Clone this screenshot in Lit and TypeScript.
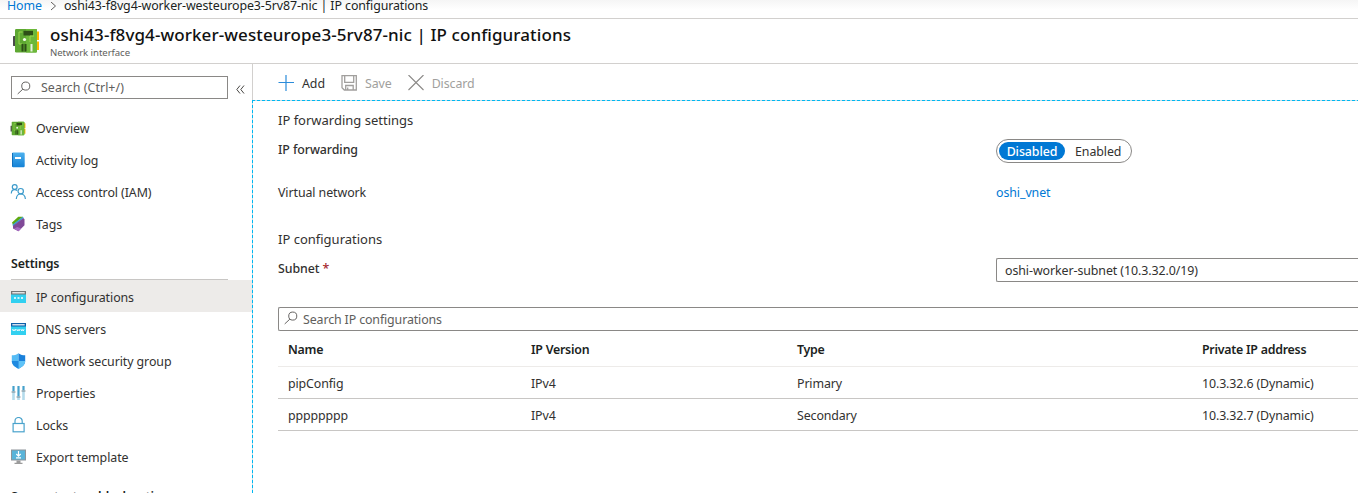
import { LitElement, html, css, svg, type TemplateResult } from "lit";
import { customElement } from "lit/decorators.js";
import { classMap } from "lit/directives/class-map.js";

const nic = svg`
  <rect x="1" y="10" width="3" height="10" rx=".4" fill="#4a4a4a"/>
  <path d="M24.500 5.500H27V14h-2.500zM24.500 15.500H27V24h-2.500z" fill="#ffb900"/>
  <rect x="3" y="3" width="22" height="23.500" rx="1.200" fill="#5ea832"/>
  <path d="M14 3h10a1 1 0 0 1 1 1v21.500a1 1 0 0 1-1 1H14z" fill="#6cb83a"/>
  <rect x="11.500" y="4.800" width="9.500" height="4.700" fill="#2d4f17"/>
  <path d="M10.500 6H7v12h3M22 10h-4v6" stroke="#9bd64f" stroke-width="1" fill="none"/>
  <circle cx="12.500" cy="13.500" r="1.600" fill="#f3ffe8"/>
  <path d="M10.500 18v7.500M13.500 18v7.500" stroke="#2d4f17" stroke-width="2"/><path d="M19.500 18v7.500" stroke="#e8f2e0" stroke-width="2"/>`;

const icons: Record<string, TemplateResult> = {
  nic: html`<svg viewBox="0 0 28 28" width="16" height="16">${nic}</svg>`,
  log: html`<svg viewBox="0 0 16 16" width="16" height="16"><defs><linearGradient id="g" x2="0" y2="1"><stop stop-color="#4db1ee"/><stop offset="1" stop-color="#1482d6"/></linearGradient></defs><rect x="2" y=".5" width="12.700" height="14.700" rx="1.200" fill="url(#g)"/><path d="M2.500 1v13.500" stroke="#0f70bd" stroke-width="1"/><rect x="5" y="5" width="6" height="2" fill="#fff"/></svg>`,
  people: html`<svg viewBox="0 0 16 16" width="16" height="16" fill="none" stroke="#3c9bcb" stroke-width="1.200"><circle cx="4.700" cy="3" r="2.400"/><path d="M1.300 9.500C1.400 7.200 2.600 5.700 4.700 5.700c1.200 0 1.800.4 2.300 1"/><circle cx="10.700" cy="7.200" r="2.700"/><path d="M6.300 15c.2-3.300 1.800-5 4.300-5s4.500 1.700 4.800 5"/></svg>`,
  tag: html`<svg viewBox="0 0 16 16" width="16" height="16"><path d="M2 6.500 8.300.8H13L3 9z" fill="#5ea90f"/><path d="M2.500 8.500 12.800.8l.9 1.200L3 10.500z" fill="#39a2d0"/><path d="M3 9.800 13.500 2l1 1.500v5.700L8.500 15.200 3 12.500z" fill="#804998"/><path d="m4 12.800 4.500 2.400 2.700-2.700-4-1.500z" fill="#a56ac0"/></svg>`,
  ip: html`<svg viewBox="0 0 16 16" width="16" height="16"><rect x="1" y="2" width="15" height="12" fill="#32d0f0"/><rect x="1" y="2" width="15" height="3.500" fill="#767676"/><rect x="2.300" y="3.200" width="12.400" height="1.200" fill="#fff"/><path d="M4 9h2M7.500 9h2M11 9h2" stroke="#fff" stroke-width="1.600"/></svg>`,
  dns: html`<svg viewBox="0 0 16 16" width="16" height="16"><rect x="1" y="2" width="15" height="12" fill="#32d0f0"/><rect x="1" y="2" width="15" height="3.500" fill="#0f5fa8"/><rect x="2.300" y="3.200" width="12.400" height="1.200" fill="#fff"/><path d="m2.500 8 .8 2 .8-1.500.8 1.500.8-2m1 0 .8 2 .8-1.500.8 1.500.8-2m1 0 .8 2 .8-1.500.8 1.500.8-2" stroke="#fff" stroke-width=".8" fill="none"/></svg>`,
  shield: html`<svg viewBox="0 0 16 16" width="16" height="16"><path d="M8.500.3c-2 1.700-4.500 2-6.700 2V8c0 4 4 6.500 6.700 7.700z" fill="#55bcf5"/><path d="M8.500.3c2 1.700 4.500 2 6.700 2V8c0 4-4 6.500-6.700 7.700z" fill="#1a80da"/><path d="M8.500 8h6.700c0 4-4 6.500-6.700 7.700z" fill="#5fc3f7"/><path d="M1.800 8h6.700v7.700C5.800 14.500 1.800 12 1.800 8z" fill="#1f8ae0"/></svg>`,
  props: html`<svg viewBox="0 0 16 16" width="16" height="16"><path d="M3.500 1v14M8.500 1v14M13.500 1v14" stroke="#b4dbec" stroke-width="2.600"/><path d="M3.500 1v5M8.500 1v10M13.500 1v4" stroke="#46a0cb" stroke-width="1.800"/><path d="M1.500 7h4M6.500 12h4M11.500 6h4" stroke="#7a8a92" stroke-width="1.200"/></svg>`,
  lock: html`<svg viewBox="0 0 16 16" width="16" height="16" fill="none" stroke="#4aa3cc" stroke-width="1.200"><rect x="3.100" y="6.500" width="11" height="8.300"/><path d="M5 6.500V4a3.600 3.500 0 0 1 7.200 0v2.500"/></svg>`,
  exp: html`<svg viewBox="0 0 16 16" width="16" height="16"><rect x="1" y=".5" width="15" height="11" fill="#8d9499"/><rect x="2" y="1.500" width="13" height="9" fill="#59b4d9"/><path d="M6.500 11.500h4v2.300h2V15h-8v-1.200h2z" fill="#9b9b9b"/><path d="M8.500 2v5M6.300 5l2.200 2.200L10.700 5M6 8.800h5" stroke="#fff" stroke-width="1.200" fill="none"/></svg>`,
};

const magnifier = html`<svg class="mag" viewBox="0 0 16 16" width="14" height="14" fill="none" stroke="#605e5c" stroke-width="1.100"><circle cx="10" cy="5.800" r="4.600"/><path d="M6.700 9.300.8 14.800"/></svg>`;

interface Item { icon: string; label: string; active?: boolean }

const general: Item[] = [
  { icon: "nic", label: "Overview" },
  { icon: "log", label: "Activity log" },
  { icon: "people", label: "Access control (IAM)" },
  { icon: "tag", label: "Tags" },
];
const settings: Item[] = [
  { icon: "ip", label: "IP configurations", active: true },
  { icon: "dns", label: "DNS servers" },
  { icon: "shield", label: "Network security group" },
  { icon: "props", label: "Properties" },
  { icon: "lock", label: "Locks" },
  { icon: "exp", label: "Export template" },
];
const rows = [
  ["pipConfig", "IPv4", "Primary", "10.3.32.6 (Dynamic)"],
  ["pppppppp", "IPv4", "Secondary", "10.3.32.7 (Dynamic)"],
];

@customElement("app-root")
export class AppRoot extends LitElement {
  static styles = css`
    :host { display: flex; flex-direction: column; height: 493px; width: 100%; overflow: hidden; background: #fff;
      font: 12.4px/20px "Noto Sans", "Open Sans", sans-serif; letter-spacing: -0.08px; color: #323130; }
    * { box-sizing: border-box; }
    svg { display: block; flex: none; }
    .crumbs { display: flex; height: 19px; flex: none; border-bottom: 1px solid #d2d0ce; background: linear-gradient(#f5f5f5, #fff 10px); padding-left: 7px; line-height: 11px; color: #201f1e; white-space: pre; letter-spacing: -0.09px; }
    .crumbs a, .link { color: #0078d4; }
    .sep { margin: 2px 7px 0 8px; }
    .head { display: flex; height: 45px; flex: none; border-bottom: 1px solid #d2d0ce; padding: 7px 0 0 12px; }
    .titles { margin-left: 10px; }
    h1 { margin: 0; font-size: 17px; line-height: 18px; font-weight: 500; color: #111; letter-spacing: 0.09px; white-space: nowrap; }
    .sub { margin-top: 2px; font-size: 9.600px; line-height: 14px; color: #605e5c; letter-spacing: -0.06px; }
    .body { display: flex; flex: 1; min-height: 0; }
    nav { width: 252px; flex: none; padding-top: 12px; overflow: hidden; }
    .find { display: flex; align-items: center; padding-left: 11px; height: 23px; margin-bottom: 13px; }
    .box { display: flex; align-items: center; width: 217px; height: 23px; border: 1px solid #8a8886; padding-left: 5px; color: #605e5c; }
    .box span { margin-left: 10px; letter-spacing: 0.05px; }
    .fold { margin: 3px 0 0 8px; }
    .item { display: flex; align-items: center; height: 32px; padding-left: 10px; gap: 10px; }
    .item span { padding-top: 2px; }
    .settings .item { padding-top: 2px; }
    .item.active { background: #edebe9; }
    .group { height: 40px; margin: 0 24px 0 11px; border-bottom: 1px solid #c8c6c4; padding-top: 14px; font-weight: 600; color: #201f1e; letter-spacing: -0.15px; }
    .group.last { border: 0; padding-top: 15px; letter-spacing: -0.04px; }
    main { flex: 1; min-width: 0; display: flex; flex-direction: column; border-left: 1px solid #d2d0ce; }
    .bar { display: flex; align-items: center; height: 36px; flex: none; padding: 1px 0 0 25px; }
    .bar span { margin: 0 16px 0 8px; padding-top: 3px; }
    .off { color: #a19f9d; }
    .pane { flex: 1; margin-left: -1px; padding: 11px 0 0 26px;
      background: repeating-linear-gradient(90deg, #00b7f1 0 3px, #c3dbe3 3px 5px) 0 0 / 100% 1px no-repeat,
        repeating-linear-gradient(180deg, #00b7f1 0 3px, #c3dbe3 3px 5px) 0 0 / 1px 100% no-repeat; }
    .h { font-size: 13px; line-height: 18px; letter-spacing: 0; height: 20px; }
    .field { display: grid; grid-template-columns: 718px 1fr; align-items: start; height: 20px; }
    .semi { font-weight: 500; }
    .f1 { margin-top: 9px; height: 34px; }
    .f2 { margin-top: 9px; }
    .h2 { margin-top: 27px; }
    .f3 { margin-top: 9px; height: 48px; }
    .req { color: #a4262c; }
    .toggle { display: flex; width: 136px; height: 24px; margin-top: -1px; border: 1px solid #8a8886; border-radius: 12px; padding: 2px; line-height: 20px; }
    .on { width: 66px; height: 18px; border-radius: 9px; background: #0078d4; color: #fff; text-align: center; font-weight: 500; line-height: 19px; }
    .alt { margin-left: 10px; }
    .select { height: 24px; margin-top: -1px; border: 1px solid #8a8886; border-right: 0; border-radius: 2px 0 0 2px; padding-left: 8px; line-height: 23px; }
    .filter { display: flex; height: 24px; border: 1px solid #8a8886; border-right: 0; border-radius: 2px 0 0 2px; padding-left: 5px; line-height: 24px; color: #605e5c; }
    .filter svg { margin-top: 3px; }
    .filter span { margin-left: 5px; letter-spacing: -0.12px; }
    .row { display: grid; grid-template-columns: 243px 266px 405px 1fr; height: 32px; padding-left: 10px; border-bottom: 1px solid #c8c6c4; line-height: 34px; letter-spacing: -0.12px; }
    .row.hd { height: 36px; line-height: 38px; font-weight: 600; border-color: #edebe9; color: #201f1e; letter-spacing: -0.25px; }
  `;

  private item(i: Item) {
    return html`<div class=${classMap({ item: true, active: !!i.active })}>${icons[i.icon]}<span>${i.label}</span></div>`;
  }

  render() {
    return html`
      <div class="crumbs"><a>Home</a><svg class="sep" width="7" height="9" viewBox="0 0 7 9" fill="none" stroke="#605e5c"><path d="m1 0 4.500 4L1 8"/></svg><span>oshi43-f8vg4-worker-westeurope3-5rv87-nic | IP configurations</span></div>
      <div class="head">
        <svg width="28" height="28" viewBox="0 0 28 28">${nic}</svg>
        <div class="titles"><h1>oshi43-f8vg4-worker-westeurope3-5rv87-nic | IP configurations</h1><div class="sub">Network interface</div></div>
      </div>
      <div class="body">
        <nav>
          <div class="find"><div class="box">${magnifier}<span>Search (Ctrl+/)</span></div>
            <svg class="fold" width="9" height="9" viewBox="0 0 9 9" fill="none" stroke="#484644"><path d="M4 .5.8 4.500 4 8.500M8 .5 4.800 4.500 8 8.500"/></svg></div>
          ${general.map((i) => this.item(i))}
          <div class="group">Settings</div>
          <div class="settings">${settings.map((i) => this.item(i))}</div>
          <div class="group last">Support + troubleshooting</div>
        </nav>
        <main>
          <div class="bar">
            <svg width="16" height="16" viewBox="0 0 16 16"><path d="M8 0v16M.5 7.500h15.500" stroke="#2b8cda" stroke-width="1.200"/></svg><span>Add</span>
            <svg width="16" height="16" viewBox="0 0 16 16" fill="none" stroke="#a19f9d" stroke-width="1.300"><path d="M1 .7h14.300v14.300H3.300L1 12.700zM3.700.7v6.600h9V.7M4.700 15v-4.500h7.500V15M6.700 12.500V15"/></svg><span class="off">Save</span>
            <svg width="16" height="16" viewBox="0 0 16 16"><path d="m.5 0 15 15m0-15-15 15" stroke="#8a8886" stroke-width="1.100"/></svg><span class="off">Discard</span>
          </div>
          <div class="pane">
            <div class="h">IP forwarding settings</div>
            <div class="field f1"><span class="semi">IP forwarding</span><div class="toggle"><span class="on">Disabled</span><span class="alt">Enabled</span></div></div>
            <div class="field f2"><span>Virtual network</span><a class="link">oshi_vnet</a></div>
            <div class="h h2">IP configurations</div>
            <div class="field f3"><span class="semi">Subnet <span class="req">*</span></span><div class="select">oshi-worker-subnet (10.3.32.0/19)</div></div>
            <div class="filter">${magnifier}<span>Search IP configurations</span></div>
            <div class="row hd"><span>Name</span><span>IP Version</span><span>Type</span><span>Private IP address</span></div>
            ${rows.map((r) => html`<div class="row">${r.map((c) => html`<span>${c}</span>`)}</div>`)}
          </div>
        </main>
      </div>`;
  }
}
